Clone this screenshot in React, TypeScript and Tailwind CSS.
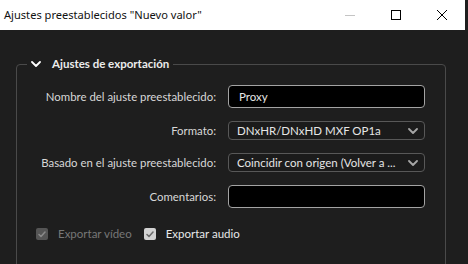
import React from 'react';

const ChevronDown = ({ className }: { className?: string }) => (
  <svg width="10" height="6" viewBox="0 0 10 6" fill="none" stroke="currentColor" strokeWidth="1.8" strokeLinecap="round" strokeLinejoin="round" className={className}>
    <path d="M1 1l4 4 4-4" />
  </svg>
);

const CheckMark = () => (
  <svg width="8" height="7" viewBox="0 0 8 7" fill="none" stroke="currentColor" strokeWidth="1.5" strokeLinecap="round" strokeLinejoin="round">
    <path d="M1 3.5l2 2 4-4.5" />
  </svg>
);

const Select = ({ value }: { value: string }) => (
  <div className="h-[19px] w-[197px] flex items-center justify-between rounded-[4px] border border-[#585858] bg-[#1b1b1b] pl-[8px] pr-[6px]">
    <span className="text-[11.5px] text-[#e6e6e6] leading-none whitespace-nowrap">{value}</span>
    <ChevronDown className="text-[#a6a6a6] shrink-0" />
  </div>
);

const TextInput = ({ value }: { value?: string }) => (
  <div className="h-[23px] w-[197px] flex items-center rounded-[4px] border border-[#a3a3a3] bg-black px-[10px]">
    <span className="text-[11.5px] text-[#e6e6e6] leading-none">{value}</span>
  </div>
);

const Label = ({ children }: { children: React.ReactNode }) => (
  <span className="text-right text-[11.4px] text-[#d8d8d8] leading-none">{children}</span>
);

const App: React.FC = () => {
  return (
    <div className="w-[468px] h-[264px] overflow-hidden bg-[#1e1e1e] flex flex-col" style={{ fontFamily: 'Lato, "Liberation Sans", sans-serif' }}>
      <div className="h-[2px]" />
      {/* title bar */}
      <div className="h-[30px] w-[465px] bg-white flex items-center shrink-0">
        <span className="pl-[4px] text-[11.1px] text-[#111] flex-1" style={{ fontFamily: '"Noto Sans", sans-serif' }}>Ajustes preestablecidos "Nuevo valor"</span>
        <div className="w-[46px] h-full flex items-center justify-center">
          <div className="w-[10px] h-px bg-[#c4c4c4]" />
        </div>
        <div className="w-[46px] h-full flex items-center justify-center">
          <div className="w-[10px] h-[10px] border border-black" />
        </div>
        <div className="w-[46px] h-full flex items-center justify-center">
          <svg width="10" height="10" viewBox="0 0 10 10" stroke="black" strokeWidth="1">
            <path d="M0 0l10 10M10 0L0 10" />
          </svg>
        </div>
      </div>

      <fieldset className="mt-[26px] ml-[16px] mr-[22px] border border-[#4a4a4a] rounded-[4px] p-0 pb-[40px]">
        <legend className="ml-[10px] px-[4px] flex items-center gap-[11px] h-[16px]">
          <ChevronDown className="text-white" />
          <span className="text-[11.5px] font-bold text-[#ececec] leading-none">Ajustes de exportación</span>
        </legend>

        <div className="mt-[13px] grid grid-cols-[199px_197px] gap-x-[12px] gap-y-[13px] items-center">
          <Label>Nombre del ajuste preestablecido:</Label>
          <TextInput value="Proxy" />
          <Label>Formato:</Label>
          <Select value="DNxHR/DNxHD MXF OP1a" />
          <Label>Basado en el ajuste preestablecido:</Label>
          <Select value="Coincidir con origen (Volver a ..." />
          <Label>Comentarios:</Label>
          <TextInput />
        </div>

        <div className="mt-[20px] ml-[19px] flex items-center h-[12px]">
          <div className="w-[12px] h-[12px] rounded-[2px] bg-[#555] text-[#8a8a8a] flex items-center justify-center">
            <CheckMark />
          </div>
          <span className="ml-[10px] text-[11.5px] text-[#777] leading-none">Exportar vídeo</span>
          <div className="ml-[12px] w-[12px] h-[12px] rounded-[2px] bg-[#d2d2d2] text-[#6a6a6a] flex items-center justify-center">
            <CheckMark />
          </div>
          <span className="ml-[10px] text-[11.5px] text-[#e8e8e8] leading-none">Exportar audio</span>
        </div>
      </fieldset>
    </div>
  );
};

export default App;
